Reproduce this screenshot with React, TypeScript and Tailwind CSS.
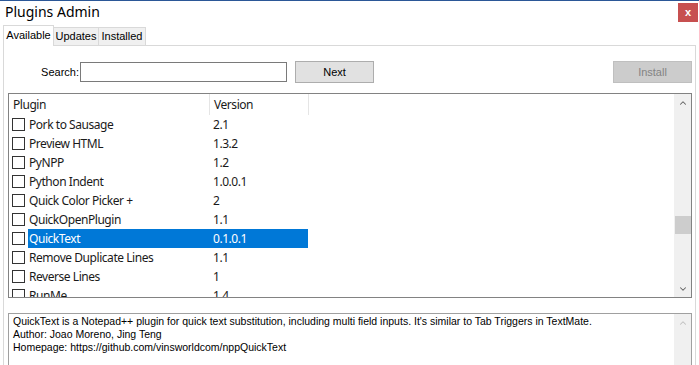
import { ChevronUp, ChevronDown } from 'lucide-react';

const plugins = [
  { name: 'Pork to Sausage', version: '2.1' },
  { name: 'Preview HTML', version: '1.3.2' },
  { name: 'PyNPP', version: '1.2' },
  { name: 'Python Indent', version: '1.0.0.1' },
  { name: 'Quick Color Picker +', version: '2' },
  { name: 'QuickOpenPlugin', version: '1.1' },
  { name: 'QuickText', version: '0.1.0.1', selected: true },
  { name: 'Remove Duplicate Lines', version: '1.1' },
  { name: 'Reverse Lines', version: '1' },
  { name: 'RunMe', version: '1.4' },
];

const ui = { fontFamily: '"Noto Sans", "Open Sans", sans-serif' };
const dlg = { fontFamily: '"Liberation Sans", Arial, sans-serif' };

const PluginRow = ({ name, version, selected }: { name: string; version: string; selected?: boolean }) => (
  <div className="flex h-[19px] items-center shrink-0">
    <div className="ml-[3px] h-[13px] w-[13px] shrink-0 border border-[#333333] bg-white" />
    <div className={`ml-[3px] flex h-[19px] w-[280px] items-center ${selected ? 'bg-[#0078d7] text-white' : 'text-[#1a1a1a]'}`}>
      <span className="w-[185px] pl-[1px]">{name}</span>
      <span>{version}</span>
    </div>
  </div>
);

export default function App() {
  return (
    <div className="flex h-[365px] w-[699px] flex-col overflow-hidden border-t border-[#2b5797] bg-white">
      {/* 제목 표시줄 */}
      <div className="flex h-[23px] shrink-0 items-start justify-between">
        <span className="mt-[2px] pl-[5px] text-[14px] leading-[18px] text-black" style={ui}>Plugins Admin</span>
        <div className="mr-[1px] mt-[2px] flex h-[19px] w-[20px] items-center justify-center bg-[#c75050] text-[11px] font-bold text-white" style={dlg}>x</div>
      </div>

      {/* 탭 */}
      <div className="ml-[3px] mt-[1px] flex h-[20px] shrink-0 items-end text-[11px] text-black" style={dlg}>
        <div className="relative z-10 -mb-[1px] flex h-[21px] w-[51px] items-center justify-center border border-b-0 border-[#d9d9d9] bg-white pb-[2px]">Available</div>
        <div className="flex h-[18px] w-[45px] items-center justify-center border border-b-0 border-l-0 border-[#d9d9d9] bg-[#f0f0f0]">Updates</div>
        <div className="flex h-[18px] w-[47px] items-center justify-center border border-b-0 border-l-0 border-[#d9d9d9] bg-[#f0f0f0]">Installed</div>
      </div>

      {/* 탭 패널 */}
      <div className="mx-[3px] flex flex-1 flex-col border border-b-0 border-[#d9d9d9] bg-white">
        <div className="mt-[15px] flex h-[22px] items-center text-[11px]" style={dlg}>
          <span className="w-[75px] text-right text-black">Search:</span>
          <div className="ml-[1px] h-[20px] w-[207px] border border-[#7a7a7a] bg-white" />
          <div className="ml-[8px] flex h-[22px] w-[79px] items-center justify-center border border-[#adadad] bg-[#e1e1e1] text-black">Next</div>
          <div className="ml-auto mr-[3px] flex h-[22px] w-[79px] items-center justify-center border border-[#bfbfbf] bg-[#cccccc] text-[#838383]">Install</div>
        </div>

        {/* 플러그인 목록 */}
        <div className="ml-[4px] mr-[3px] mt-[10px] flex h-[205px] border border-[#828282] bg-white text-[12px] tracking-[-0.45px]" style={ui}>
          <div className="flex flex-1 flex-col overflow-hidden">
            <div className="flex h-[21px] shrink-0 items-center text-[#1a1a1a]">
              <span className="w-[200px] pl-[4px]">Plugin</span>
              <span className="flex h-[21px] w-[100px] items-center border-l border-r border-[#e5e5e5] pl-[4px]">Version</span>
            </div>
            {plugins.map((p) => (
              <PluginRow key={p.name} {...p} />
            ))}
          </div>
          <div className="flex w-[17px] shrink-0 flex-col items-center bg-[#f0f0f0]">
            <div className="flex h-[17px] items-center justify-center text-[#606060]">
              <ChevronUp size={10} strokeWidth={2.5} />
            </div>
            <div className="h-[105px]" />
            <div className="h-[18px] w-[16px] bg-[#cdcdcd]" />
            <div className="flex-1" />
            <div className="flex h-[17px] items-center justify-center text-[#606060]">
              <ChevronDown size={10} strokeWidth={2.5} />
            </div>
          </div>
        </div>

        {/* 설명 */}
        <div className="ml-[4px] mr-[3px] mt-[15px] flex flex-1 border border-b-0 border-[#a0a0a0] bg-white text-[10.5px] leading-[13px] text-black" style={dlg}>
          <div className="flex-1 pl-[4px] pt-[1px]">
            <div>QuickText is a Notepad++ plugin for quick text substitution, including multi field inputs. It's similar to Tab Triggers in TextMate.</div>
            <div>Author: Joao Moreno, Jing Teng</div>
            <div>Homepage: https://github.com/vinsworldcom/nppQuickText</div>
          </div>
          <div className="flex w-[17px] shrink-0 justify-center bg-[#f0f0f0] pt-[4px] text-[#c0c0c0]">
            <ChevronUp size={10} strokeWidth={2.5} />
          </div>
        </div>
      </div>
    </div>
  );
}
